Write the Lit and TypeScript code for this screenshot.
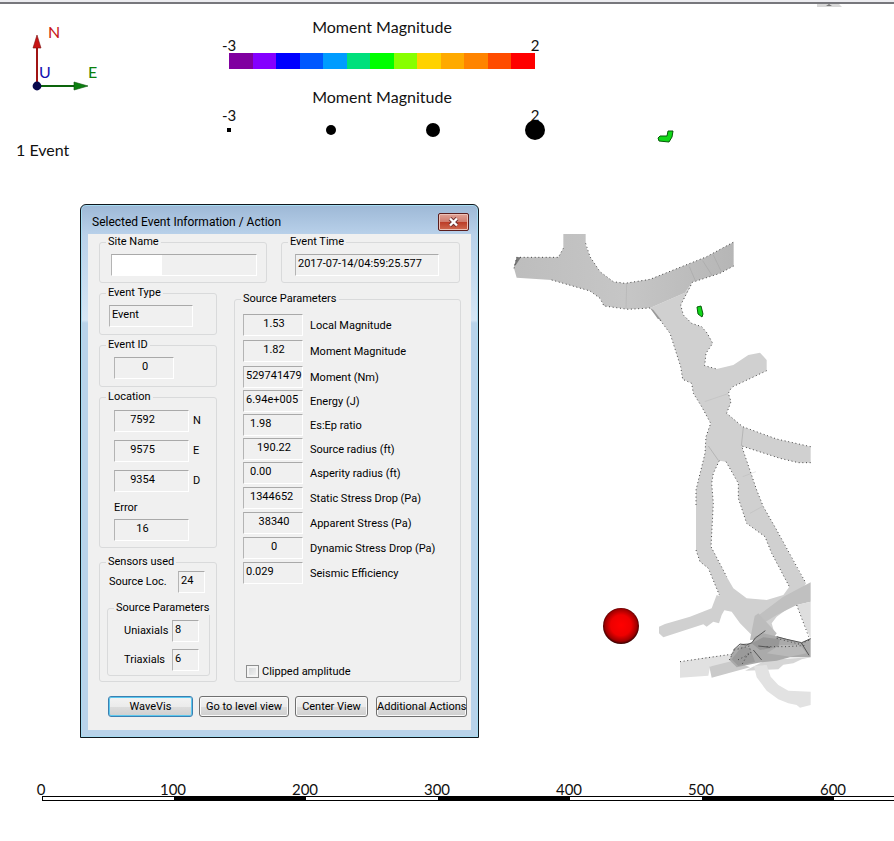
import { LitElement, html, css, svg } from "lit";
import { customElement } from "lit/decorators.js";

const RAMP = ["#8000a0", "#8400ff", "#0000ff", "#0058ff", "#009cff", "#00e07c", "#00ff00", "#88ff00", "#ffd200", "#ffaa00", "#ff8400", "#ff4c00", "#ff0000"];
const SCALE = [0, 100, 200, 300, 400, 500, 600];
const DOTS = ["dot d1", "dot d2", "dot d3", "dot d4"];

const PARAMS: [string, string, string][] = [
  ["Local Magnitude", "1.53", "mid"],
  ["Moment Magnitude", "1.82", "mid"],
  ["Moment (Nm)", "529741479", "left"],
  ["Energy (J)", "6.94e+005", "left"],
  ["Es:Ep ratio", "1.98", "indent"],
  ["Source radius (ft)", "190.22", "mid"],
  ["Asperity radius (ft)", "0.00", "indent"],
  ["Static Stress Drop (Pa)", "1344652", "indent"],
  ["Apparent Stress (Pa)", "38340", "mid"],
  ["Dynamic Stress Drop (Pa)", "0", "mid"],
  ["Seismic Efficiency", "0.029", "left"],
];

@customElement("mine-map")
export class MineMap extends LitElement {
  static styles = css`
    :host { display: block; overflow: hidden; }
    svg { display: block; }
    .edge { fill: none; stroke: #444; stroke-width: 3; stroke-dasharray: 3 8; }
    .crease { fill: none; stroke: #a8a8a8; stroke-width: 2; }
    .dark { fill: none; stroke: #555; stroke-width: 3; }
  `;
  render() {
    return html`<svg width="100%" height="100%" aria-label="Mine map">
      <defs>
        <radialGradient id="ball" cx="50%" cy="48%" r="52%">
          <stop offset="0" stop-color="#ff0000" /><stop offset="0.55" stop-color="#ee0000" />
          <stop offset="0.85" stop-color="#a00000" /><stop offset="1" stop-color="#300000" />
        </radialGradient>
        <linearGradient id="drift" x1="0" x2="1"><stop offset="0" stop-color="#bdbdbd" /><stop offset="0.5" stop-color="#c6c6c6" /><stop offset="1" stop-color="#b6b6b6" /></linearGradient>
      </defs>
      ${svg`
      <path d="M817 4h22l3 3h-25z" fill="#d8d8d8" /><path d="M826 6l3-2 3 2z" fill="#777" />
      <path d="M658 138l2-2h7l1-5h5l-1 6-3 5-10-1z" fill="#10d818" stroke="#055a08" />
      <path d="M697 307l4-1 2 8-1 3-4-3z" fill="#10d818" stroke="#055a08" />
      <svg x="500" y="220" width="320" height="500" viewBox="0 0 960 1500">
        <path d="M735 1352L800 1320 932 1312 905 1318 880 1330 850 1334 835 1348z" fill="#d6d6d6" />
        <path d="M762 1338L800 1335 812 1370 835 1395 865 1412 932 1415V1455L900 1463 890 1455 865 1450 835 1438 800 1412 770 1372z" fill="#e2e2e2" />
        <path d="M540 1325L620 1312 700 1302 695 1335 630 1340 625 1367 540 1373z" fill="#e1e1e1" />
        <path d="M477 1220L495 1212 570 1190 635 1165 650 1125 690 1140 665 1185 657 1210 640 1205 620 1220 610 1213 490 1252 477 1240z" fill="#d0d0d0" />
        <path fill-rule="evenodd" fill="#d0d0d0" d="M450 264L555 218 577 190 542 255 550 285 575 310 605 320 622 340 638 370 618 400 614 437 650 447 700 435 745 405 780 398 800 420V452L695 502 685 520 693 545 680 580 728 620 830 657 932 680V728H895L840 715 725 678 770 810 790 860 830 930 900 1060 918 1090 885 1150 830 1190 815 1210 825 1245 760 1250 720 1210 695 1175 645 1165 658 1125 625 1045 600 1025 588 990V810L615 700 618 650 632 610 605 560 580 520 575 490 548 478 542 440 510 340 480 300z
          M658 722L640 760 635 790 640 850 633 980 680 1070 700 1105 740 1135 800 1140 850 1125 868 1100 815 1000 795 950 740 910 715 835 715 790 678 725z" />
        <path d="M190 42H257V75L270 110 300 155 340 185 375 190 450 178 520 150 620 110 701 66V138L660 160 577 187 555 218 450 264 385 268 312 258 300 235 270 213 155 180 50 173 42 145 50 112H175L190 85z" fill="url(#drift)" />
        <path d="M50 112h13l-15 22-6 6z" fill="#777" />
        <path d="M450 264l10 6 26 33-14-8z" fill="#999" />
        <path d="M568 140l18 42M608 122l28 44M640 105l24 50" class="crease" />
        <path d="M380 190l-2 75" class="crease" opacity=".6" />
        <path d="M730 622l-6 56M625 678l30 43" class="crease" />
        <path d="M614 545l70-24M728 770l40-15M750 880l36-20" class="crease" opacity=".4" />
        <path class="edge" d="M42 145L50 112H175L190 85M257 70L270 110 300 155 340 185 375 190 450 178 520 150 620 110 701 66M701 138L660 160 577 187 542 255 550 285 575 310 605 320 622 340 638 370 618 400 614 437 650 447M800 452L695 502 685 520 693 545 680 580 728 620 830 657 932 680M155 180L270 213 300 235 312 258 385 268 450 264M480 300L510 340 542 440 548 478 575 490 580 520 605 560 632 610 618 650 615 700 588 810V860M932 728H895L840 715 725 678 770 810 790 860 830 930 918 1090M588 990L600 1025 625 1045 658 1125M658 722L640 760 635 790 640 850 633 980 680 1070M678 725L715 790V835L740 910 795 950 815 1000 868 1100" />
        <path d="M770 1190L850 1130 932 1087V1145L890 1155 830 1185 790 1210z" fill="#c0c0c0" />
        <path d="M890 1155L932 1145V1255L915 1220z" fill="#dedede" /><path class="edge" d="M890 1155l36 95" />
        <path d="M764 1188L775 1180 830 1240 820 1255 750 1260z" fill="#bcbcbc" />
        <path d="M628 1340L700 1322 750 1342 635 1373z" fill="#cacaca" />
        <path d="M700 1290L725 1272 755 1268 765 1250 790 1240 840 1252 905 1268 932 1255V1312L870 1312 830 1322 775 1328 710 1342 688 1320z" fill="#aaaaaa" />
        <path d="M755 1270L790 1252 840 1258 835 1280 780 1290z" fill="#979797" />
        <path d="M695 1318L725 1280 750 1285 765 1325 715 1338z" fill="#9a9a9a" />
        <path d="M840 1275L900 1275 920 1300 870 1310 800 1300z" fill="#b9b9b9" />
        <path class="dark" d="M700 1290l20-18 20 3 16-7 10-14 30-22M775 1278l35 4M830 1250l30 8 45 10 27-12M760 1290l25 30M905 1270l22 36" />
        <path class="edge" d="M540 1325L700 1302M688 1320l15-30 45-12 5 22-40 20M745 1300l-20 35M800 1280l60 0 60-4M830 1255l70 18 30-14" />
      </svg>
      <circle cx="621" cy="626" r="18" fill="url(#ball)" />`}
    </svg>`;
  }
}

@customElement("event-dialog")
export class EventDialog extends LitElement {
  static styles = css`
    :host {
      display: block; box-sizing: border-box; padding: 0 7px 7px; border: 1px solid #10161c; border-radius: 6px 6px 0 0;
      background: linear-gradient(#9db8d6 0, #b9d1ea 30px, #d6e6f5 115px, #b9d3ea 118px, #b9d3ea 100%);
      box-shadow: inset 0 0 0 1px #a5dcf2; font: 11px/14px Roboto, "Liberation Sans", sans-serif; color: #000;
    }
    .title { display: flex; align-items: center; justify-content: space-between; height: 29px; padding: 4px 2px 0 4px; box-sizing: border-box; }
    h1 { margin: 0; font: 12px/16px Roboto, "Open Sans", sans-serif; }
    .close { width: 31px; height: 18px; padding: 0; border: 1px solid #5a1d1d; border-radius: 2px; display: grid; place-items: center;
      background: linear-gradient(#e0a397, #d07c6e 48%, #bb3a26 50%, #cf6a50); box-shadow: inset 0 0 0 1px #ecc0b6; }
    .client { background: #f0f0f0; padding: 1px 4px 13px 11px; }
    fieldset { min-width: 0; margin: 0; padding: 5px 6px 6px; border: 1px solid #d9dadb; border-radius: 3px; box-sizing: border-box; }
    legend { padding: 0 2px; height: 14px; white-space: nowrap; }
    input.box { height: 22px; box-sizing: border-box; margin: 0; padding: 0 0 3px 2px; border: 1px solid; border-color: #a9a9a9 #fff #fff #b4b4b4; background: #f0f0f0; font: inherit; color: inherit; outline: none; }
    .top { display: flex; gap: 14px; padding-right: 7px; }
    .site { flex: 167; } .time { flex: 179; }
    .site .box { width: 146px; margin-left: 5px; background: linear-gradient(90deg, #fff 50px, #f0f0f0 50px); }
    .time .box { width: 144px; margin-left: 7px; }
    .body { display: grid; grid-template-columns: 118px 1fr; column-gap: 17px; padding: 3px 6px 0 0; }
    .stack { display: flex; flex-direction: column; gap: 3px; }
    .type, .id { padding-bottom: 7px; }
    .type .box { width: 84px; margin-left: 3px; }
    .id .box { width: 60px; margin-left: 8px; text-align: center; }
    .loc { padding-top: 6px; padding-bottom: 5px; }
    .coords { display: grid; grid-template-columns: 75px auto; grid-auto-rows: 22px; gap: 8px 4px; align-items: center; padding-left: 8px; }
    .coords .box, .err .box { width: 75px; text-align: center; padding-right: 20px; }
    .err { display: block; padding: 9px 0 1px 8px; }
    .err .box { display: block; margin-top: 4px; }
    .sensors { padding: 2px 6px 5px; margin-top: 4px; }
    .row { display: grid; grid-template-columns: 1fr 27px; align-items: center; }
    .row.loc-count { padding: 0 5px 0 3px; }
    .inner { margin: 8px 0 0 1px; padding: 5px 10px 4px 16px; }
    .inner legend { margin-left: -10px; }
    .inner .row + .row { margin-top: 7px; }
    .row .box { width: 27px; }
    .source { margin-top: 6px; display: flex; flex-direction: column; padding: 8px 6px 3px 8px; }
    .source legend { margin-left: -2px; }
    .params { display: grid; grid-template-columns: 60px 1fr; column-gap: 7px; grid-template-rows: repeat(2, 26px) repeat(4, 24px) repeat(5, 25px); }
    .params label { padding-top: 5px; }
    .params .box { width: 60px; }
    .params .mid { text-align: center; }
    .params .indent { padding-left: 6px; }
    .clip { display: flex; align-items: center; gap: 3px; margin: auto 0 0 3px; line-height: 13px; }
    .clip input { appearance: none; width: 13px; height: 13px; margin: 0; border: 1px solid #8e8f8f; background: linear-gradient(135deg, #cfd2d4, #f6f6f6); box-shadow: inset 0 0 0 2px #f4f4f4; }
    .actions { display: flex; gap: 6px; margin-top: 14px; padding-left: 9px; }
    .actions button { height: 21px; padding: 0; border: 1px solid #707070; border-radius: 3px; font: inherit; color: inherit; white-space: nowrap;
      background: linear-gradient(#f3f3f3, #ebebeb 50%, #dddddd 50%, #cfcfcf); box-shadow: inset 0 0 0 1px #fafafa; }
    .actions .w85 { width: 85px; } .actions .w90 { width: 90px; } .actions .w73 { width: 73px; } .actions .w91 { width: 91px; margin-left: auto; }
    .actions .focus { border-color: #3c7fb1; box-shadow: inset 0 0 0 1px #5cc8ee; }
  `;
  render() {
    return html`
      <div class="title">
        <h1>Selected Event Information / Action</h1>
        <button class="close" aria-label="Close">
          <svg width="13" height="10" viewBox="0 0 13 10"><path d="M3 1.5L10 8.5M10 1.5L3 8.5" stroke="#6b3030" stroke-width="4" /><path d="M3 1.5L10 8.5M10 1.5L3 8.5" stroke="#fff" stroke-width="2.4" /></svg>
        </button>
      </div>
      <div class="client">
        <div class="top">
          <fieldset class="site"><legend>Site Name</legend><input class="box" aria-label="Site Name" readonly /></fieldset>
          <fieldset class="time"><legend>Event Time</legend><input class="box" aria-label="Event Time" readonly .value=${"2017-07-14/04:59:25.577"} /></fieldset>
        </div>
        <div class="body">
          <div class="stack">
            <fieldset class="type"><legend>Event Type</legend><input class="box" aria-label="Event Type" readonly .value=${"Event"} /></fieldset>
            <fieldset class="id"><legend>Event ID</legend><input class="box" aria-label="Event ID" readonly .value=${"0"} /></fieldset>
            <fieldset class="loc"><legend>Location</legend>
              <div class="coords">
                ${[["N", "7592"], ["E", "9575"], ["D", "9354"]].map(([k, v]) => html`<input class="box" id=${k} readonly .value=${v} /><label for=${k}>${k}</label>`)}
              </div>
              <label class="err">Error<input class="box" readonly .value=${"16"} /></label>
            </fieldset>
            <fieldset class="sensors"><legend>Sensors used</legend>
              <label class="row loc-count">Source Loc.<input class="box" readonly .value=${"24"} /></label>
              <fieldset class="inner"><legend>Source Parameters</legend>
                <label class="row">Uniaxials<input class="box" readonly .value=${"8"} /></label>
                <label class="row">Triaxials<input class="box" readonly .value=${"6"} /></label>
              </fieldset>
            </fieldset>
          </div>
          <fieldset class="source"><legend>Source Parameters</legend>
            <div class="params">
              ${PARAMS.map(([name, value, align], i) => html`<input class="box ${align}" id="p${i}" readonly .value=${value} /><label for="p${i}">${name}</label>`)}
            </div>
            <label class="clip"><input type="checkbox" />Clipped amplitude</label>
          </fieldset>
        </div>
        <div class="actions">
          <button class="w85 focus">WaveVis</button><button class="w90">Go to level view</button><button class="w73">Center View</button><button class="w91">Additional Actions</button>
        </div>
      </div>`;
  }
}

@customElement("app-root")
export class AppRoot extends LitElement {
  static styles = css`
    :host { display: flex; flex-direction: column; min-height: 100vh; position: relative; overflow: hidden; background: #fff; color: #111; font: 15px/20px Lato, "Open Sans", sans-serif; }
    .edgebar { height: 2px; background: #ececf0; border-bottom: 2px solid #77777c; }
    mine-map { position: absolute; inset: 0; }
    event-dialog { position: absolute; left: 80px; top: 204px; width: 399px; }
    .hud { display: flex; position: relative; }
    .side { width: 229px; }
    .side p { margin: 0; padding-left: 16px; font-size: 16px; }
    .axes { display: block; }
    .axes text { font: 16px Lato, sans-serif; }
    .legends { width: 306px; padding-top: 13px; }
    h2 { margin: 0; font: inherit; font-size: 16px; text-align: center; }
    .legend + .legend { margin-top: 18px; }
    .ticks { display: flex; justify-content: space-between; margin: 1px -7px; line-height: 14px; }
    .ticks span { width: 14px; text-align: center; }
    .ramp { display: flex; height: 16px; }
    .ramp i { flex: 1; }
    .dots { display: flex; justify-content: space-between; margin: -3px -10px 0; }
    .cell { width: 20px; height: 20px; display: grid; place-items: center; }
    .dot { background: #000; border-radius: 50%; }
    .d1 { width: 4px; height: 4px; border-radius: 0; } .d2 { width: 10px; height: 10px; } .d3 { width: 14px; height: 14px; } .d4 { width: 20px; height: 20px; }
    .scale { margin-top: auto; padding: 0 0 40px 42px; display: flex; position: relative; }
    .seg { flex: none; width: 132px; }
    .seg span { display: block; width: 40px; margin-left: -21px; text-align: center; line-height: 14px; }
    .seg i { display: block; height: 5px; box-sizing: border-box; border: 1px solid #000; border-width: 1px 0; }
    .seg:first-child i { border-left-width: 1px; }
    .seg:nth-child(even) i { background: #000; }
  `;
  render() {
    const ticks = html`<div class="ticks"><span>-3</span><span>2</span></div>`;
    return html`
      <div class="edgebar"></div>
      <mine-map></mine-map>
      <div class="hud">
        <div class="side">
          <svg class="axes" width="120" height="136" viewBox="0 4 120 136" aria-label="Axes">
            <path d="M37 86V46" stroke="#a01414" stroke-width="2" /><path d="M37 35l4 13h-8z" fill="#c81414" stroke="#7a1010" stroke-width=".6" />
            <path d="M37 86H76" stroke="#0c640c" stroke-width="2" /><path d="M88 86l-14-4v8z" fill="#0c8010" stroke="#0a500a" stroke-width=".6" />
            <circle cx="37" cy="86" r="4.4" fill="#08084c" />
            <text x="48" y="38" fill="#c81414">N</text><text x="39" y="78" fill="#1010b0">U</text><text x="88" y="78" fill="#0c800c">E</text>
          </svg>
          <p>1 Event</p>
        </div>
        <div class="legends">
          <div class="legend"><h2>Moment Magnitude</h2>${ticks}<div class="ramp">${RAMP.map((c) => html`<i style="background:${c}"></i>`)}</div></div>
          <div class="legend"><h2>Moment Magnitude</h2>${ticks}<div class="dots">${DOTS.map((d) => html`<div class="cell"><div class=${d}></div></div>`)}</div></div>
        </div>
      </div>
      <div class="scale">${SCALE.map((n) => html`<div class="seg"><span>${n}</span><i></i></div>`)}</div>
      <event-dialog></event-dialog>`;
  }
}
